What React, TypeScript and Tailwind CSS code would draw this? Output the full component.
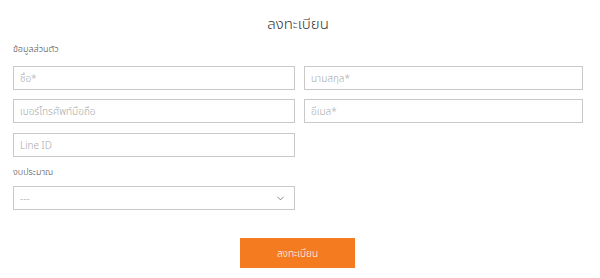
import { ChevronDown } from "lucide-react";

const inputClass =
  "h-[24px] w-full border border-[#c9c9c9] bg-white px-[6px] text-[10px] font-light text-[#333] placeholder:text-[#a8a8a8] outline-none";

function Field({ placeholder }: { placeholder: string }) {
  return <input className={inputClass} placeholder={placeholder} type="text" />;
}

export default function App() {
  return (
    <div className="h-[278px] w-[600px] bg-white font-['Noto_Sans','Noto_Sans_Thai',sans-serif] text-[#333]">
      <div className="pl-[13px] pr-[17px] pt-[13px]">
        <h1 className="text-center text-[15px] font-light leading-[20px] text-[#333]">ลงทะเบียน</h1>
        <div className="mt-[9px] text-[9px] font-light leading-[14px] text-[#444]">ข้อมูลส่วนตัว</div>
        <div className="mt-[10px] grid grid-cols-[282px_279px] gap-x-[9px] gap-y-[9px]">
          <Field placeholder="ชื่อ*" />
          <Field placeholder="นามสกุล*" />
          <Field placeholder="เบอร์โทรศัพท์มือถือ" />
          <Field placeholder="อีเมล*" />
        </div>
        <div className="mt-[8px] w-[282px]">
          <Field placeholder="Line ID" />
        </div>
        <div className="mt-[8px] text-[9px] font-light leading-[14px] text-[#444]">งบประมาณ</div>
        <div className="relative mt-[7px] w-[282px]">
          <div className="flex h-[24px] w-full items-center justify-between border border-[#c9c9c9] bg-white pl-[6px] pr-[8px] text-[10px] font-light text-[#a8a8a8]">
            <span>---</span>
            <ChevronDown className="h-[11px] w-[11px] text-[#555]" strokeWidth={1.5} />
          </div>
        </div>
        <div className="mt-[28px] flex justify-center">
          <button
            type="button"
            className="ml-[-1px] h-[30px] w-[115px] bg-[#f47b20] text-[10px] font-light text-white"
          >
            ลงทะเบียน
          </button>
        </div>
      </div>
    </div>
  );
}
